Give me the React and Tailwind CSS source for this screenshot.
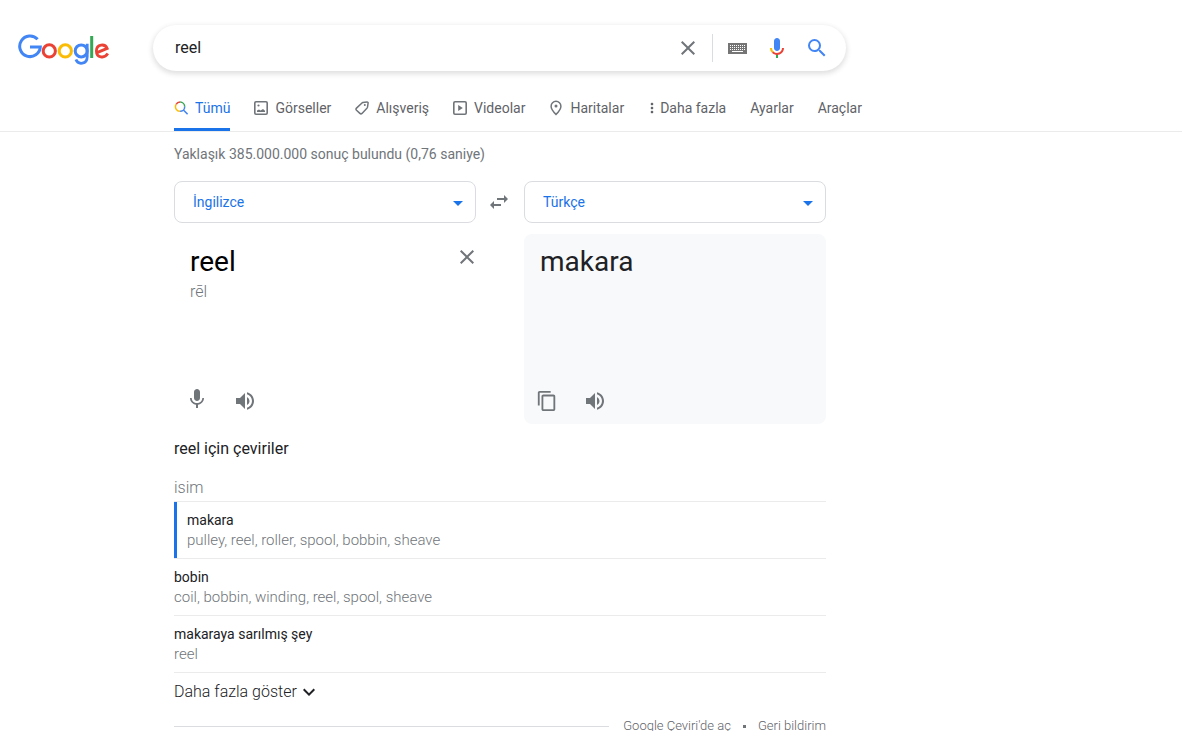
import React from 'react';
import clsx from 'clsx';
import {
  MdArrowDropDown,
  MdClose,
  MdContentCopy,
  MdExpandMore,
  MdMic,
  MdMoreVert,
  MdSearch,
  MdSwapHoriz,
  MdVolumeUp,
} from 'react-icons/md';

const TRANSLATIONS = [
  { word: 'makara', synonyms: 'pulley, reel, roller, spool, bobbin, sheave', active: true },
  { word: 'bobin', synonyms: 'coil, bobbin, winding, reel, spool, sheave' },
  { word: 'makaraya sarılmış şey', synonyms: 'reel' },
];

const GoogleLogo = () => (
  <svg width="92" height="32" viewBox="0 0 92 32" fill="none" strokeWidth="3" role="img" aria-label="Google">
    <path d="M19.6 5.3A10.3 10.3 0 1 0 22.3 12.9H12" stroke="#4285f4" />
    <circle cx="31.3" cy="16.9" r="6.1" stroke="#ea4335" />
    <circle cx="47.3" cy="16.9" r="6.1" stroke="#fbbc05" />
    <circle cx="63.2" cy="16.9" r="6" stroke="#4285f4" />
    <path d="M69.2 9.7V22.5C69.2 30.8 60 31 57.9 25.6" stroke="#4285f4" strokeWidth="2.8" />
    <path d="M73.7 2V24" stroke="#34a853" />
    <path d="M79 18.6L89.2 14.4C87.2 9.3 78.4 9.8 78.4 16.9C78.4 23.9 86.5 24.9 89.8 19.6" stroke="#ea4335" strokeWidth="2.8" />
  </svg>
);

const KeyboardIcon = () => (
  <svg width="19" height="11" viewBox="0 0 19 11" aria-hidden="true">
    <path d="M0 0h19v11H0z" fill="#757575" />
    <path d="M2 2.5h15M2 4.5h15M2 6.5h15" stroke="#fff" strokeDasharray="1 1" />
    <path d="M4 8.5h11" stroke="#fff" />
  </svg>
);

const VoiceIcon = () => (
  <svg width="24" height="24" viewBox="0 0 24 24" aria-hidden="true">
    <path fill="#4285f4" d="M12 15c1.66 0 3-1.31 3-2.97V5.01C15 3.35 13.66 2 12 2S9 3.34 9 5.01v7.02C9 13.69 10.34 15 12 15z" />
    <path fill="#34a853" d="M11 18.08h2V22h-2z" />
    <path fill="#fbbc05" d="M7.05 16.87C5.78 15.54 5 14.04 5 12h2c0 1.45.56 2.42 1.47 3.38v.32l-1.15 1.18z" />
    <path fill="#ea4335" d="M12 16.93a4.97 5.25 0 0 1-3.54-1.55l-1.41 1.49C8.31 18.21 10.07 19 12 19c3.87 0 6.99-2.92 6.99-7H17c0 2.92-2.24 4.93-5 4.93z" />
  </svg>
);

const AllIcon = () => (
  <svg width="14" height="14" viewBox="0 0 14 14" fill="none" strokeWidth="1.5" aria-hidden="true">
    <path d="M2.1 3.4A4.6 4.6 0 0 1 6.1 1.1" stroke="#ea4335" />
    <path d="M6.1 1.1A4.6 4.6 0 0 1 10.7 5.7" stroke="#34a853" />
    <path d="M2.1 3.4A4.6 4.6 0 0 0 6.1 10.3" stroke="#fbbc05" />
    <path d="M6.1 10.3A4.6 4.6 0 0 0 10.7 5.7M9.4 9L13.6 13.2" stroke="#4285f4" />
  </svg>
);

const ImageIcon = () => (
  <svg width="14" height="14" viewBox="0 0 14 14" aria-hidden="true">
    <rect x="0.8" y="0.8" width="12.4" height="12.4" rx="1.2" fill="none" stroke="#70757a" strokeWidth="1.6" />
    <path d="M3 11V9.5L5 8.4l1.5 1L9 8l2 1.7V11z" fill="#70757a" />
    <circle cx="4.5" cy="4.5" r="1.1" fill="#70757a" />
  </svg>
);

const TagIcon = () => (
  <svg width="14" height="14" viewBox="0 0 14 14" aria-hidden="true">
    <path d="M7.8 1.6L12 .9a1 1 0 0 1 1.1 1.1l-.6 4.2a2 2 0 0 1-.6 1.1L7 12.4a1.5 1.5 0 0 1-2.1 0L1.5 9.2a1.5 1.5 0 0 1 0-2.1L6.7 2.2a2 2 0 0 1 1.1-.6z" fill="none" stroke="#70757a" strokeWidth="1.5" />
    <circle cx="9.8" cy="4" r="1" fill="#70757a" />
  </svg>
);

const VideoIcon = () => (
  <svg width="14" height="14" viewBox="0 0 14 14" aria-hidden="true">
    <rect x="0.8" y="0.8" width="12.4" height="12.4" rx="1.2" fill="none" stroke="#70757a" strokeWidth="1.6" />
    <path d="M5.2 4v6L9.8 7z" fill="#70757a" />
  </svg>
);

const PinIcon = () => (
  <svg width="14" height="16" viewBox="0 0 14 16" aria-hidden="true">
    <path d="M7 1.3a4.9 4.9 0 0 0-4.9 4.9C2.1 9.6 7 14.4 7 14.4s4.9-4.8 4.9-8.2A4.9 4.9 0 0 0 7 1.3z" fill="none" stroke="#70757a" strokeWidth="1.5" />
    <circle cx="7" cy="6" r="1.5" fill="#70757a" />
  </svg>
);

const TABS = [
  { label: 'Tümü', icon: <AllIcon />, active: true },
  { label: 'Görseller', icon: <ImageIcon /> },
  { label: 'Alışveriş', icon: <TagIcon /> },
  { label: 'Videolar', icon: <VideoIcon /> },
  { label: 'Haritalar', icon: <PinIcon /> },
];

const LanguageSelect = ({ label, value }) => (
  <div className="relative flex-1">
    <select
      aria-label={label}
      defaultValue={value}
      className="block w-full h-[42px] pl-[18px] pr-10 appearance-none rounded-lg border border-[#dadce0] bg-white text-sm text-[#1a73e8]"
    >
      <option>İngilizce</option>
      <option>Türkçe</option>
    </select>
    <MdArrowDropDown className="absolute right-1.5 top-2.5 w-6 h-6 text-[#1a73e8] pointer-events-none" />
  </div>
);

const App = () => {
  return (
    <div className="h-screen overflow-hidden bg-white font-['Roboto',sans-serif] text-[#202124]">
      {/* Search header */}
      <header className="flex items-center pt-[25px]">
        <a href="#" className="w-[153px] shrink-0 pl-[18px] pt-1">
          <GoogleLogo />
        </a>
        <form
          role="search"
          onSubmit={e => e.preventDefault()}
          className="flex items-center w-full max-w-[693px] h-[46px] pl-[22px] pr-[17px] rounded-full shadow-[0_2px_5px_1px_rgba(64,60,67,0.16)]"
        >
          <input
            type="text"
            aria-label="Ara"
            defaultValue="reel"
            className="flex-1 min-w-0 bg-transparent text-base outline-none"
          />
          <button type="button" aria-label="Temizle" className="text-[#70757a]">
            <MdClose className="w-6 h-6" />
          </button>
          <div className="ml-3 w-px h-7 bg-[#dadce0]" />
          <button type="button" aria-label="Klavye" className="ml-[15px]">
            <KeyboardIcon />
          </button>
          <button type="button" aria-label="Sesli arama" className="ml-[18px]">
            <VoiceIcon />
          </button>
          <button type="submit" aria-label="Google'da Ara" className="ml-4 text-[#4285f4]">
            <MdSearch className="w-6 h-6" />
          </button>
        </form>
      </header>

      {/* Result type tabs */}
      <nav className="flex items-stretch gap-6 h-[61px] pl-[174px] border-b border-[#ebebeb] text-sm text-[#5f6368]">
        {TABS.map(tab => (
          <a
            key={tab.label}
            href="#"
            className={clsx(
              'flex items-center gap-[7px] pt-[17px] border-b-3 whitespace-nowrap',
              tab.active ? 'border-[#1a73e8] text-[#1a73e8]' : 'border-transparent'
            )}
          >
            {tab.icon}
            {tab.label}
          </a>
        ))}
        <button type="button" className="flex items-center pt-[17px] border-b-3 border-transparent whitespace-nowrap">
          <MdMoreVert className="-mx-1 w-4 h-4" />
          <span className="pl-1">Daha fazla</span>
        </button>
        <a href="#" className="flex items-center pt-[17px] border-b-3 border-transparent">Ayarlar</a>
        <a href="#" className="flex items-center pt-[17px] border-b-3 border-transparent">Araçlar</a>
      </nav>

      <main className="ml-[174px] max-w-[652px]">
        <p className="pt-3 text-sm text-[#70757a]">Yaklaşık 385.000.000 sonuç bulundu (0,76 saniye)</p>

        {/* Translator */}
        <div className="mt-[17px] flex items-center">
          <LanguageSelect label="Kaynak dil" value="İngilizce" />
          <button type="button" aria-label="Dilleri değiştir" className="w-12 flex justify-center pr-0.5 text-[#70757a]">
            <MdSwapHoriz className="w-6 h-6" />
          </button>
          <LanguageSelect label="Hedef dil" value="Türkçe" />
        </div>
        <div className="mt-[11px] flex gap-12 h-[190px]">
          <div className="flex-1 flex flex-col justify-between pl-4 pb-[11px]">
            <div className="flex items-start">
              <div className="flex-1 min-w-0 pt-2.5">
                <textarea
                  aria-label="Kaynak metin"
                  rows={1}
                  defaultValue="reel"
                  className="block w-full h-9 resize-none overflow-hidden text-[28px] leading-9 text-black outline-none"
                />
                <p className="text-base text-[#70757a] font-light">rēl</p>
              </div>
              <button type="button" aria-label="Metni sil" className="-mr-[3px] pt-[11px] text-[#70757a]">
                <MdClose className="w-6 h-6" />
              </button>
            </div>
            <div className="flex items-end gap-6 -ml-[5px] text-[#70757a]">
              <button type="button" aria-label="Sesle çevir" className="pb-0.5">
                <MdMic className="w-6 h-6" />
              </button>
              <button type="button" aria-label="Dinle">
                <MdVolumeUp className="w-6 h-6" />
              </button>
            </div>
          </div>
          <div className="flex-1 flex flex-col justify-between rounded-lg bg-[#f8f9fa] pl-4 pb-[11px]">
            <p className="pt-2.5 text-[28px] leading-9">makara</p>
            <div className="flex items-center gap-6 -ml-[5px] text-[#70757a]">
              <button type="button" aria-label="Kopyala" className="w-6 h-6 flex items-center justify-center">
                <MdContentCopy className="w-[22px] h-[22px]" />
              </button>
              <button type="button" aria-label="Çeviriyi dinle">
                <MdVolumeUp className="w-6 h-6" />
              </button>
            </div>
          </div>
        </div>

        {/* Dictionary */}
        <h2 className="mt-[13px] text-base">reel için çeviriler</h2>
        <h3 className="mt-[15px] pb-px text-base font-light text-[#70757a]">isim</h3>
        <ul>
          {TRANSLATIONS.map(item => (
            <li key={item.word} className="border-t border-[#ebebeb]">
              <div className={clsx('h-14 pt-2', item.active && 'border-l-3 border-[#1a73e8] pl-2.5')}>
                <p className="text-sm">{item.word}</p>
                <p className="text-[15px] leading-5 text-[#70757a] font-light">{item.synonyms}</p>
              </div>
            </li>
          ))}
        </ul>
        <button type="button" className="flex items-center w-full h-[38px] border-t border-[#ebebeb] text-base font-light">
          Daha fazla göster
          <MdExpandMore className="w-6 h-6" />
        </button>

        <footer className="mt-1.5 flex items-center text-[13px] leading-5 font-light text-[#5f6368] whitespace-nowrap">
          <div className="flex-1 h-px mr-3.5 bg-[#dadce0]" />
          <a href="#">Google Çeviri'de aç</a>
          <span className="mx-3 w-[3px] h-[3px] bg-[#70757a]" />
          <a href="#">Geri bildirim</a>
        </footer>
      </main>
    </div>
  );
};

export default App;
